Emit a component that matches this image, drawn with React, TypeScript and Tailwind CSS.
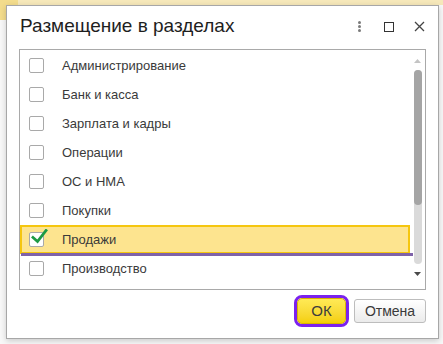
import { clsx } from "clsx";

const sections = [
  "Администрирование",
  "Банк и касса",
  "Зарплата и кадры",
  "Операции",
  "ОС и НМА",
  "Покупки",
  "Продажи",
  "Производство",
];
const selected = "Продажи";

function Check() {
  return (
    <svg width="17" height="15" viewBox="0 0 17 15" className="absolute left-[1px] -top-[4px]">
      <path d="M2 8.5 L6.5 12.5 L15 1.5" fill="none" stroke="#1d9a44" strokeWidth="2.8" strokeLinecap="square" />
    </svg>
  );
}

function Row({ label }: { label: string }) {
  const on = label === selected;
  return (
    <div className="relative h-[29px]">
      <div
        className={clsx(
          "flex h-full items-center",
          on ? "mr-[3px] border-2 border-[#f5c60f] bg-[#fde48f] pl-[7px]" : "pl-[9px]"
        )}
      >
        <div className="relative h-[15px] w-[15px] shrink-0 rounded-[2px] border border-[#a9a9a9] bg-white">
          {on && <Check />}
        </div>
        <span className="ml-[18px] text-[13px] text-[#3a3a3a]">{label}</span>
      </div>
      {on && <div className="absolute left-[1px] right-0 -bottom-[2px] h-[3px] bg-[#7f62a9]" />}
    </div>
  );
}

export default function App() {
  return (
    <div className="relative h-[344px] w-[443px] overflow-hidden bg-[#f8f8f8] font-['Liberation_Sans',Arial,sans-serif]">
      <div className="flex h-[5px] bg-[#f6e8ba]">
        <div className="w-[18px] bg-[#f3dc8c]" />
      </div>
      <div className="h-[15px] w-[6px] bg-[#f3dc8c]" />

      <div className="absolute left-[6px] top-[5px] flex h-[334px] w-[433px] flex-col border border-[#a7a7a7] bg-white shadow-[0_2px_6px_rgba(0,0,0,0.18)]">
        <div className="flex h-[41px] items-center pl-[13px] pr-[4px]">
          <h1 className="text-[19px] text-[#1e1e1e]">Размещение в разделах</h1>
          <div className="ml-auto flex items-center">
            <div className="flex w-[30px] flex-col items-center gap-[1px]">
              <span className="h-[3px] w-[3px] rounded-full bg-[#7a7a7a]" />
              <span className="h-[3px] w-[3px] rounded-full bg-[#7a7a7a]" />
              <span className="h-[3px] w-[3px] rounded-full bg-[#7a7a7a]" />
            </div>
            <div className="flex w-[30px] justify-center">
              <div className="h-[10px] w-[10px] border-[1.5px] border-[#333]" />
            </div>
            <div className="flex w-[30px] justify-center">
              <svg width="11" height="11" viewBox="0 0 11 11">
                <path d="M1 1 L10 10 M10 1 L1 10" stroke="#444" strokeWidth="1.3" />
              </svg>
            </div>
          </div>
        </div>

        <div className="mx-[12px] mt-[2px] flex h-[241px] border border-[#a9a9a9]">
          <div className="flex-1 pt-[1px]">
            {sections.map((s) => (
              <Row key={s} label={s} />
            ))}
          </div>
          <div className="flex w-[12px] flex-col items-center pt-[9px] pr-[3px]">
            <svg width="7" height="4" viewBox="0 0 7 4">
              <path d="M0 4 L3.5 0 L7 4 Z" fill="#c4c4c4" />
            </svg>
            <div className="mt-[7px] flex h-[194px] w-[8px] flex-col rounded-full bg-[#dadada]">
              <div className="h-[135px] rounded-full bg-[#a5a5a5]" />
            </div>
            <svg width="7" height="4" viewBox="0 0 7 4" className="mt-[8px]">
              <path d="M0 0 L7 0 L3.5 4 Z" fill="#4a4a4a" />
            </svg>
          </div>
        </div>

        <div className="mt-[5px] flex items-center justify-end gap-[5px] pr-[12px]">
          <div className="rounded-[8px] border-[3px] border-[#7b22ee]">
            <button className="flex h-[26px] w-[49px] items-center justify-center rounded-[5px] border border-[#d8b400] bg-gradient-to-b from-[#ffea55] to-[#f4cf00] text-[15px] text-[#3d3d3d]">
              ОК
            </button>
          </div>
          <button className="flex h-[24px] w-[72px] items-center justify-center rounded-[3px] border border-[#bdbdbd] bg-gradient-to-b from-white to-[#ebebeb] text-[14px] text-[#3a3a3a]">
            Отмена
          </button>
        </div>
      </div>
    </div>
  );
}
